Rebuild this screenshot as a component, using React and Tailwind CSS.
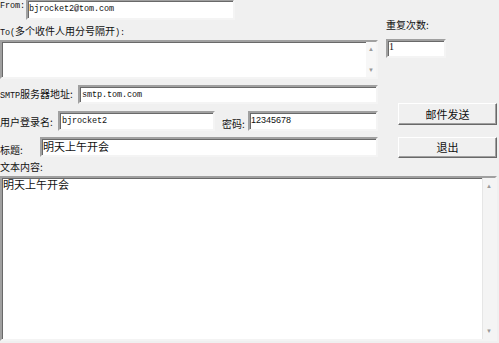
const mono = "font-['Liberation_Mono',monospace] text-[8.5px] tracking-[-0.1px]";
const cjk = "font-['Noto_Sans_CJK_SC','Noto_Sans',sans-serif] text-[10px]";
const sunken =
  "bg-white border-2 border-t-[#a0a0a0] border-l-[#a0a0a0] border-b-[#f4f4f4] border-r-[#f4f4f4] shadow-[inset_1px_1px_0_#696969]";
const button =
  "flex items-center justify-center bg-[#f0f0f0] border border-t-white border-l-white border-b-[#696969] border-r-[#696969] shadow-[inset_-1px_-1px_0_#a0a0a0] text-[11px] font-['Noto_Sans_CJK_SC',sans-serif] text-[#111]";

function ScrollCol({ className }) {
  return (
    <div className={`flex flex-col justify-between items-center text-[6px] text-[#9a9a9a] leading-none ${className}`}>
      <span>▲</span>
      <span>▼</span>
    </div>
  );
}

export default function App() {
  return (
    <div className="w-[499px] h-[343px] bg-[#f0f0f0] overflow-hidden text-[#111]">
      <div className="flex">
        {/* left column */}
        <div className="w-[378px] flex flex-col">
          <div className="flex h-[20px]">
            <span className={`${mono} w-[26px] pt-[1px] leading-[10px]`}>From:</span>
            <div className={`${sunken} w-[209px] flex items-center px-[1px] -mt-[1px]`}>
              <span className={mono}>bjrocket2@tom.com</span>
            </div>
          </div>

          <div className="h-[20px] flex items-baseline pt-[6px] whitespace-nowrap leading-none">
            <span className={mono}>To(</span>
            <span className={cjk}>多个收件人用分号隔开</span>
            <span className={mono}>):</span>
          </div>

          <div className={`${sunken} h-[39px] flex justify-end`}>
            <ScrollCol className="w-[10px] py-[4px] bg-[#f7f7f7]" />
          </div>

          <div className="flex h-[19px] mt-[6px]">
            <div className="w-[78px] flex items-baseline pt-[4px] whitespace-nowrap leading-none">
              <span className={mono}>SMTP</span>
              <span className={cjk}>服务器地址:</span>
            </div>
            <div className={`${sunken} flex-1 flex px-[2px] pt-[2px]`}>
              <span className={mono}>smtp.tom.com</span>
            </div>
          </div>

          <div className="flex h-[20px] mt-[7px]">
            <div className={`${cjk} w-[58px] flex items-center whitespace-nowrap`}>用户登录名:</div>
            <div className={`${sunken} w-[157px] flex px-[2px] pt-[2px]`}>
              <span className={mono}>bjrocket2</span>
            </div>
            <div className={`${cjk} w-[33px] pl-[7px] flex items-center pt-[4px] whitespace-nowrap`}>密码:</div>
            <div className={`${sunken} flex-1 flex px-[1px] pt-[1px]`}>
              <span className="font-['Liberation_Sans',sans-serif] text-[9px]">12345678</span>
            </div>
          </div>

          <div className="flex h-[20px] mt-[6px]">
            <div className={`${cjk} w-[40px] flex items-center pt-[4px] whitespace-nowrap`}>标题:</div>
            <div className={`${sunken} flex-1 flex items-center px-[1px]`}>
              <span className="font-['Noto_Sans_CJK_SC',sans-serif] text-[11px] leading-none -mt-[2px]">明天上午开会</span>
            </div>
          </div>
        </div>

        {/* right column */}
        <div className="ml-[8px] flex-1 flex flex-col">
          <div className={`${cjk} mt-[18px] h-[12px] flex items-center`}>重复次数:</div>
          <div className={`${sunken} mt-[9px] w-[60px] h-[19px] px-[1px] flex items-start`}>
            <span className="font-['Liberation_Serif',serif] text-[10px] leading-[10px] block pt-[1px]">1</span>
          </div>
          <div className={`${button} ml-[12px] w-[99px] h-[22px] mt-[45px]`}>邮件发送</div>
          <div className={`${button} ml-[12px] w-[99px] h-[21px] mt-[12px]`}>退出</div>
        </div>
      </div>

      <div className={`${cjk} h-[18px] flex items-center leading-none`}>文本内容:</div>

      <div className={`${sunken} w-[497px] h-[165px] flex`}>
        <div className="flex-1 px-[1px] pt-[1px]">
          <span className="font-['Noto_Sans_CJK_SC',sans-serif] text-[11px] leading-none block">明天上午开会</span>
        </div>
        <ScrollCol className="w-[13px] py-[5px] bg-[#f4f4f4] border-l border-[#e6e6e6] text-[#8a8a8a]" />
      </div>
    </div>
  );
}
